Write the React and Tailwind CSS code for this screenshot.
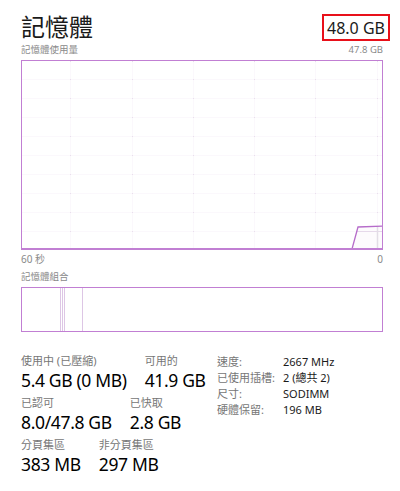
// Panneau « 記憶體 » du Gestionnaire des tâches
const FONT = { fontFamily: '"Segoe UI", "Noto Sans", "Noto Sans CJK TC", sans-serif' }

const GRID_Y = [18, 37, 56, 75, 94, 113, 132, 151, 170]
const GRID_X = [48, 110, 171, 232, 293, 355]

function UsageGraph() {
  return (
    <div className="h-[190px] w-[362px] border border-[#c17fd3]">
      <svg width="360" height="188" viewBox="0 0 360 188" className="block">
        <defs>
          <clipPath id="fillArea">
            <polygon points="330,188 336,166 361,165 361,188" />
          </clipPath>
        </defs>
        {/* grille très pâle */}
        {GRID_Y.map((y) => (
          <line key={'h' + y} x1="0" y1={y + 0.5} x2="360" y2={y + 0.5} stroke="#fbf8fc" />
        ))}
        {GRID_X.map((x) => (
          <line key={'v' + x} x1={x + 0.5} y1="0" x2={x + 0.5} y2="188" stroke="#fbf8fc" />
        ))}
        {GRID_X.map((x) =>
          [0, ...GRID_Y].map((y) => (
            <rect key={x + '-' + y} x={x} y={y} width="1" height="1" fill="#e9dfec" />
          ))
        )}
        {/* zone remplie sous la courbe */}
        <polygon points="330,188 336,166 361,165 361,188" fill="#fdfbfd" />
        <g clipPath="url(#fillArea)">
          {GRID_Y.map((y) => (
            <line key={'fh' + y} x1="0" y1={y + 0.5} x2="360" y2={y + 0.5} stroke="#e6d9ea" />
          ))}
          {GRID_X.map((x) => (
            <line key={'fv' + x} x1={x + 0.5} y1="0" x2={x + 0.5} y2="188" stroke="#e3dde6" strokeWidth="1.5" />
          ))}
        </g>
        <polyline points="330,188 336,166 361,165" fill="none" stroke="#b66cca" strokeWidth="1.3" />
        <line x1="0" y1="187.5" x2="360" y2="187.5" stroke="#c17fd3" />
      </svg>
    </div>
  )
}

function CompositionBar() {
  return (
    <div className="flex h-[45px] w-[362px] border border-[#c17fd3]">
      <div className="w-[39px] border-r border-[#ddc6e5]" />
      <div className="w-[1px]" />
      <div className="w-[3px] border-l border-r border-[#ddc6e5]" />
      <div className="w-[18px] border-r border-[#ddc6e5]" />
      <div className="flex-1" />
    </div>
  )
}

function Stat({ label, value }) {
  return (
    <div className="flex flex-col">
      <span className="text-[11px] leading-[14px] text-[#767676]">{label}</span>
      <span className="text-[17.5px] leading-[24px] tracking-[-0.35px] text-black">{value}</span>
    </div>
  )
}

const DETAILS = [
  ['速度:', '2667 MHz'],
  ['已使用插槽:', '2 (總共 2)'],
  ['尺寸:', 'SODIMM'],
  ['硬體保留:', '196 MB'],
]

export default function App() {
  return (
    <div className="h-[491px] w-[400px] overflow-hidden bg-white pl-[21px] pr-[17px]" style={FONT}>
      {/* En-tête */}
      <div className="flex items-end justify-between pt-[13px]">
        <span className="text-[24px] leading-[28px] text-[#1a1a1a]">記憶體</span>
        <div className="mr-[-7px] flex h-[27px] w-[68px] items-center justify-center border-2 border-[#e8101a] text-[16px] text-[#1a1a1a]">
          48.0 GB
        </div>
      </div>

      <div className="mt-[2px] flex justify-between text-[9.5px] leading-[14px] text-[#8a8a8a]">
        <span>記憶體使用量</span>
        <span>47.8 GB</span>
      </div>

      <div className="mt-[3px]">
        <UsageGraph />
      </div>

      <div className="mt-[2px] flex justify-between text-[10px] leading-[14px] text-[#8a8a8a]">
        <span>60 秒</span>
        <span>0</span>
      </div>

      <div className="mt-[4px] text-[9.5px] leading-[14px] text-[#8a8a8a]">記憶體組合</div>

      <div className="mt-[3px]">
        <CompositionBar />
      </div>

      {/* Statistiques */}
      <div className="mt-[22px] flex">
        <div className="flex w-[196px] flex-col gap-[4px]">
          <div className="flex gap-[18px]">
            <Stat label="使用中 (已壓縮)" value="5.4 GB (0 MB)" />
            <Stat label="可用的" value="41.9 GB" />
          </div>
          <div className="flex gap-[18px]">
            <Stat label="已認可" value="8.0/47.8 GB" />
            <Stat label="已快取" value="2.8 GB" />
          </div>
          <div className="flex gap-[18px]">
            <Stat label="分頁集區" value="383 MB" />
            <Stat label="非分頁集區" value="297 MB" />
          </div>
        </div>

        <div className="grid grid-cols-[66px_auto] content-start text-[11px] leading-[16px]">
          {DETAILS.map(([k, v]) => (
            <div key={k} className="contents">
              <span className="text-[#767676]">{k}</span>
              <span className="text-[#1a1a1a]">{v}</span>
            </div>
          ))}
        </div>
      </div>
    </div>
  )
}
